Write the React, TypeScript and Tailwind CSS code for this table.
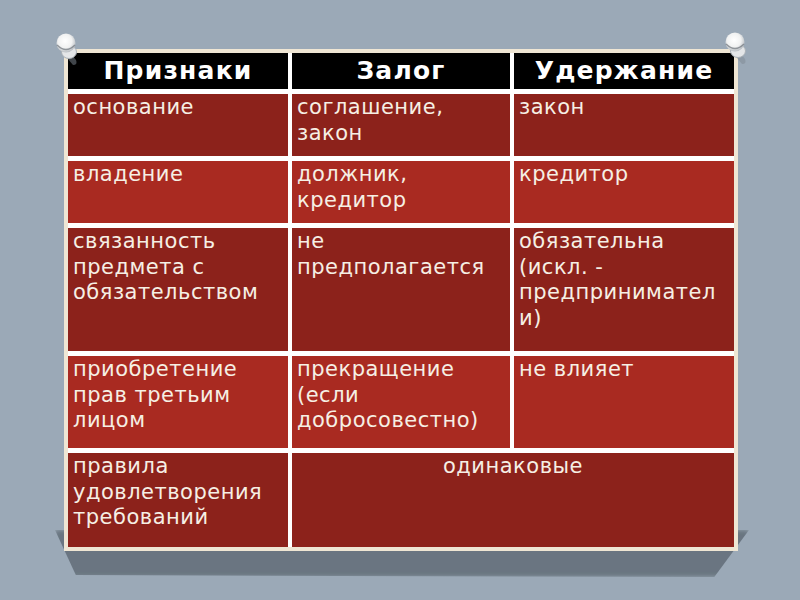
import React from 'react';

const font = { fontFamily: "'DejaVu Sans', 'Noto Sans', sans-serif" };

const rows = [
  { tone: 'dark', h: 'h-[62px]', cells: ['основание', 'соглашение,\nзакон', 'закон'] },
  { tone: 'light', h: 'h-[62px]', cells: ['владение', 'должник,\nкредитор', 'кредитор'] },
  {
    tone: 'dark',
    h: 'h-[123px]',
    cells: ['связанность\nпредмета с\nобязательством', 'не\nпредполагается', 'обязательна\n(искл. -\nпредпринимател\nи)'],
  },
  {
    tone: 'light',
    h: 'h-[92px]',
    cells: ['приобретение\nправ третьим\nлицом', 'прекращение\n(если\nдобросовестно)', 'не влияет'],
  },
];

function Pin({ className }: { className: string }) {
  return (
    <svg className={className} width="40" height="40" viewBox="0 0 40 40">
      <defs>
        <radialGradient id="pinHead" cx="0.45" cy="0.4" r="0.6">
          <stop offset="0" stopColor="#ffffff" />
          <stop offset="0.6" stopColor="#f1f2f2" />
          <stop offset="1" stopColor="#b9bec3" />
        </radialGradient>
      </defs>
      {/* stem shadow */}
      <path d="M14 14 L27 30 Q29 35 24 35 L13 22 Z" fill="#7f8a94" opacity="0.5" />
      <ellipse cx="20" cy="22" rx="7.5" ry="6.5" fill="#e4e6e8" />
      <ellipse cx="20" cy="22" rx="7.5" ry="6.5" fill="none" stroke="#a9b0b6" strokeWidth="1" />
      <circle cx="17" cy="13" r="9.5" fill="url(#pinHead)" />
      <path d="M8 15 Q17 24 26 15" fill="none" stroke="#6f757c" strokeWidth="1.3" opacity="0.7" />
    </svg>
  );
}

function Cell({ text, tone, h }: { text: string; tone: string; h: string }) {
  return (
    <div
      className={`${h} ${tone === 'dark' ? 'bg-[#8c221b]' : 'bg-[#a92a21]'} pl-[5px] pt-[1px] text-[21px] leading-[25.5px] tracking-[0.5px] text-[#f6efe4] whitespace-pre-line`}
    >
      {text}
    </div>
  );
}

export default function App() {
  return (
    <div className="relative w-[800px] h-[600px] overflow-hidden bg-[#9ba9b7] pt-[49px] pl-[64px]" style={font}>
      {/* curled shadow under the sheet */}
      <div
        className="absolute left-[55px] top-[530px] w-[694px] h-[47px] bg-[#5a656f] opacity-75 blur-[2px]"
        style={{ clipPath: 'polygon(0 0, 100% 0, 95% 100%, 3% 96%)' }}
      />
      <div className="relative w-[674px] border-[4px] border-[#efe6d4] bg-white">
        <div className="grid grid-cols-[220px_218px_220px] gap-x-[4px] gap-y-[5px]">
          {['Признаки', 'Залог', 'Удержание'].map((t) => (
            <div
              key={t}
              className="h-[36px] bg-black flex items-center justify-center text-white font-bold text-[25px] tracking-[1.2px]"
            >
              {t}
            </div>
          ))}
          {rows.map((r, i) => (
            <React.Fragment key={i}>
              {r.cells.map((c, j) => (
                <Cell key={j} text={c} tone={r.tone} h={r.h} />
              ))}
            </React.Fragment>
          ))}
          <Cell text={'правила\nудовлетворения\nтребований'} tone="dark" h="h-[94px]" />
          <div className="col-span-2 h-[94px] bg-[#8c221b] pt-[1px] text-center text-[21px] leading-[25.5px] tracking-[0.5px] text-[#f6efe4]">
            одинаковые
          </div>
        </div>
      </div>
      <Pin className="absolute left-[49px] top-[30px]" />
      <Pin className="absolute left-[718px] top-[29px]" />
    </div>
  );
}
